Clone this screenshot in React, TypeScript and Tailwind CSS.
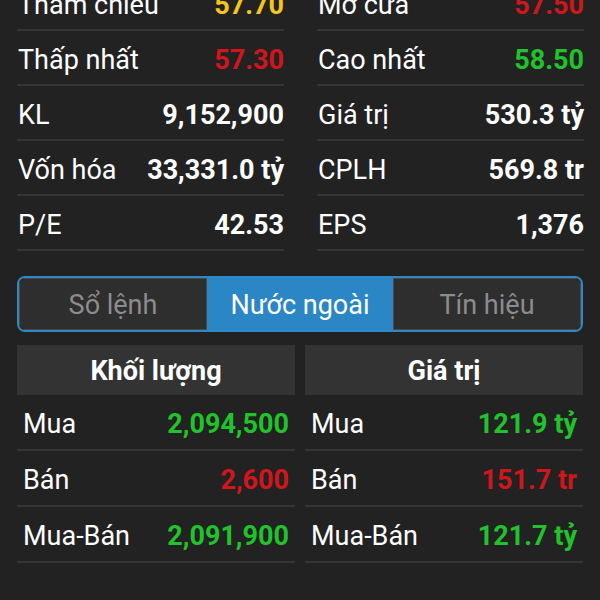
import React from 'react';

type Row = { label: string; value: string; color: string };

const left: Row[] = [
  { label: 'Tham chiếu', value: '57.70', color: 'text-[#f2c61f]' },
  { label: 'Thấp nhất', value: '57.30', color: 'text-[#d0161d]' },
  { label: 'KL', value: '9,152,900', color: 'text-white' },
  { label: 'Vốn hóa', value: '33,331.0 tỷ', color: 'text-white' },
  { label: 'P/E', value: '42.53', color: 'text-white' },
];

const right: Row[] = [
  { label: 'Mở cửa', value: '57.50', color: 'text-[#d0161d]' },
  { label: 'Cao nhất', value: '58.50', color: 'text-[#21c22c]' },
  { label: 'Giá trị', value: '530.3 tỷ', color: 'text-white' },
  { label: 'CPLH', value: '569.8 tr', color: 'text-white' },
  { label: 'EPS', value: '1,376', color: 'text-white' },
];

const volume: Row[] = [
  { label: 'Mua', value: '2,094,500', color: 'text-[#21c22c]' },
  { label: 'Bán', value: '2,600', color: 'text-[#d0161d]' },
  { label: 'Mua-Bán', value: '2,091,900', color: 'text-[#21c22c]' },
];

const money: Row[] = [
  { label: 'Mua', value: '121.9 tỷ', color: 'text-[#21c22c]' },
  { label: 'Bán', value: '151.7 tr', color: 'text-[#d0161d]' },
  { label: 'Mua-Bán', value: '121.7 tỷ', color: 'text-[#21c22c]' },
];

function StatColumn({ rows }: { rows: Row[] }) {
  return (
    <div className="w-[267px] flex flex-col">
      {rows.map((r) => (
        <div
          key={r.label}
          className="h-[55px] pt-[5px] flex items-center justify-between border-b-2 border-[#353535]"
        >
          <span className="text-[27px] text-white pl-[1px]">{r.label}</span>
          <span className={`text-[27px] font-bold ${r.color}`}>{r.value}</span>
        </div>
      ))}
    </div>
  );
}

function FlowColumn({ title, rows }: { title: string; rows: Row[] }) {
  return (
    <div className="w-[278px] flex flex-col">
      <div className="h-[50px] pt-[2px] bg-[#333333] flex items-center justify-center text-[27px] font-bold text-white">
        {title}
      </div>
      {rows.map((r) => (
        <div
          key={r.label}
          className="h-[56px] pt-[5px] flex items-center justify-between px-[6px] border-b-2 border-[#353535]"
        >
          <span className="text-[27px] text-white">{r.label}</span>
          <span className={`text-[27px] font-bold ${r.color}`}>{r.value}</span>
        </div>
      ))}
    </div>
  );
}

export default function App() {
  const tabs = ['Sổ lệnh', 'Nước ngoài', 'Tín hiệu'];
  return (
    <div
      className="w-[600px] h-[600px] overflow-hidden bg-[#222222]"
      style={{ fontFamily: 'Roboto, "Noto Sans", sans-serif' }}
    >
      {/* Thông tin giá */}
      <div className="-mt-[24px] flex justify-between pl-[17px] pr-[16px]">
        <StatColumn rows={left} />
        <StatColumn rows={right} />
      </div>

      {/* Tabs */}
      <div className="mx-[17px] mt-[25px] h-[56px] flex rounded-lg border-2 border-[#2f87c6] overflow-hidden">
        {tabs.map((t, i) => (
          <div
            key={t}
            className={`flex-1 pt-[3px] flex items-center justify-center text-[27px] ${
              i === 1
                ? 'bg-[#2b86c6] text-white'
                : 'bg-[#2e2e2e] text-[#8c8c8c] border border-[#4a4a4a]'
            }`}
          >
            {t}
          </div>
        ))}
      </div>

      {/* Khối ngoại */}
      <div className="mt-[13px] flex justify-between pl-[17px] pr-[17px]">
        <FlowColumn title="Khối lượng" rows={volume} />
        <FlowColumn title="Giá trị" rows={money} />
      </div>
    </div>
  );
}
